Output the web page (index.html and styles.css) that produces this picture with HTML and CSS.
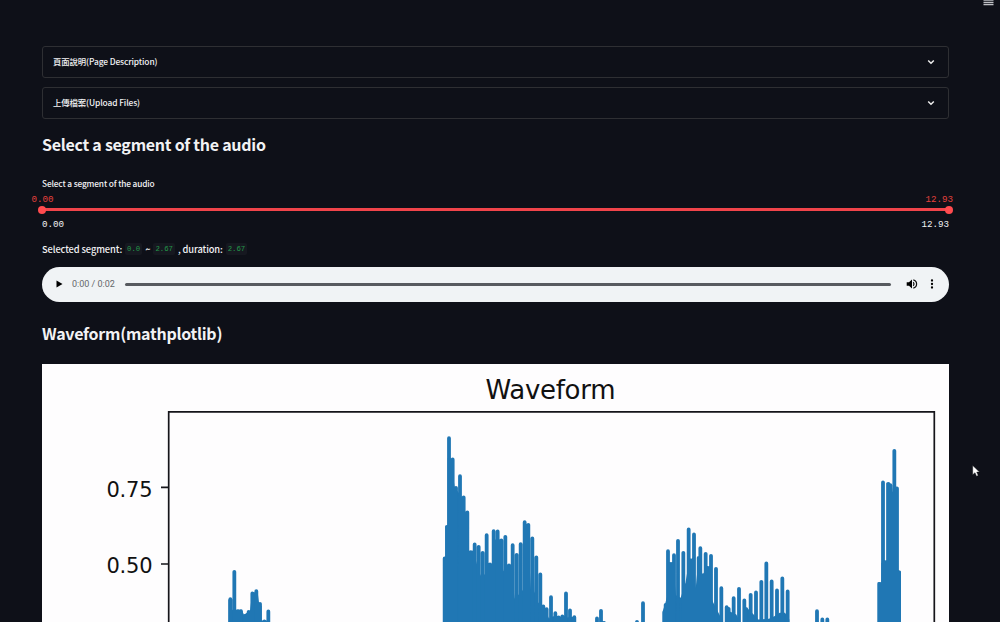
FILE: index.html
```html
<!DOCTYPE html>
<html lang="zh-Hant">
<head>
<meta charset="utf-8">
<title>Waveform</title>
<link rel="stylesheet" href="styles.css">
</head>
<body>
<svg class="menu" viewBox="0 0 11 8"><path d="M.5 0H10.500M.5 2.300H10.500M.5 4.500H10.500"/></svg>
<main class="page">
  <section class="expander"><span>頁面說明(Page Description)</span><svg class="chevron" viewBox="0 0 8 6"><path d="M1.200 1.500L4 4.200L6.800 1.500"/></svg></section>
  <section class="expander"><span>上傳檔案(Upload Files)</span><svg class="chevron" viewBox="0 0 8 6"><path d="M1.200 1.500L4 4.200L6.800 1.500"/></svg></section>
  <h2 class="heading">Select a segment of the audio</h2>
  <div class="slider">
    <div class="label">Select a segment of the audio</div>
    <div class="values"><span>0.00</span><span>12.93</span></div>
    <div class="track"><i class="thumb"></i><i class="thumb"></i></div>
    <div class="limits"><span>0.00</span><span>12.93</span></div>
  </div>
  <p class="selected"><span>Selected segment:</span><code>0.0</code><span>~</span><code>2.67</code><span>, duration:</span><code>2.67</code></p>
  <div class="player">
    <svg class="play" viewBox="0 0 7 8"><path d="M.5.500L6.500 4L.5 7.500Z"/></svg>
    <span class="time">0:00 / 0:02</span>
    <span class="progress"></span>
    <svg class="volume" viewBox="0 0 12 10"><path d="M.7 3.300H3L6 .5V9.500L3 6.700H.7Z"/><path class="wave" d="M7.300 3.200Q8.700 5 7.300 6.800M7.300.9C11.700 2 11.700 8 7.300 9.100"/></svg>
    <svg class="dots" viewBox="0 0 4 10"><circle cx="2" cy="1.500" r="1.150"/><circle cx="2" cy="5" r="1.150"/><circle cx="2" cy="8.500" r="1.150"/></svg>
  </div>
  <h2 class="heading wave-title">Waveform(mathplotlib)</h2>
  <svg class="plot" viewBox="42 364.500 907 258">
    <text class="plot-title" x="550.500" y="399.500" textLength="130">Waveform</text>
    <text class="tick" x="106.500" y="497" textLength="46">0.75</text>
    <text class="tick" x="106.500" y="573.800" textLength="46">0.50</text>
    <path class="axes" d="M168.700 640V412.300H934.300V640M161 487.800H168.700M161 564.500H168.700"/>
    <g transform="translate(430 425) scale(.33333)">
      <path class="body" d="M39 620V400H46V304H53V100H62L74 188L96 218H104L107 415H113L118 380L130 378L141 420L152 453L164 450L175 418L186 435L192 345H209L220 440L232 425L243 438L254 522L266 510L278 497L289 475L300 495L309 345L313 500L325 535L340 545L357 582L370 575L403 580L437 576V620Z"/>
      <path class="bars" d="M44 402V620M51 307V620M57 41V620M68 105V620M78 190V620M90 155V620M101 219V620M112 264V620M122 383V620M134 360V620M146 367V620M158 385V620M170 332V620M180 420V620M191 320V620M203 321V620M214 348V620M226 337V620M237 423V620M248 362V620M260 391V620M272 359V620M284 293V620M295 301V620M307 342V620M319 399V620M331 450V620M340 546V620M350 554V620M363 518V620M376 566V620M386 579V620M397 576V620M408 507V620M420 558V620M433 578V620"/>
    </g>
    <g transform="translate(210 550) scale(.33333)">
      <path class="body" d="M55 230V150H67V181H95L102 196L120 183L127 128H143L147 159L155 170V213H180V230Z"/>
      <path class="bars" d="M61 149V230M73 67V230M84 185V230M93 185V230M105 199V230M116 187V230M127 132V230M139 125V230M150 163V230M163 216V230M175 186V230"/>
    </g>
    <g transform="translate(560 500) scale(.33333)">
      <path class="bars" d="M111 357V380M123 334V380M132 370V380M231 367V380M249 311V380"/>
    </g>
    <g transform="translate(650 510) scale(.33333)">
      <path class="body" d="M38 350V305L45 284L53 255V160H69L78 257L92 265L106 222L118 150H128L137 238L146 142L157 230L168 135L174 240L190 280L207 313L223 345V350ZM238 350V305L259 315L276 350L291 295L308 312L325 330L357 328L373 320L389 310H405L418 330V350Z"/>
      <path class="bars" d="M43 309V350M47 286V350M54 125V350M63 163V350M72 137V350M84 94V350M100 130V350M107 228V350M116 60V350M124 153V350M132 75V350M141 240V350M146 145V350M151 116V350M160 197V350M167 133V350M174 175V350M183 139V350M198 178V350M214 236V350M230 293V350M236 298V350M251 266V350M267 238V350M283 273V350M288 298V350M302 256V350M318 249V350M334 217V350M349 162V350M365 216V350M381 243V350M397 207V350M413 246V350M501 305V350M517 330V350M532 330V350"/>
    </g>
    <g transform="translate(860 400) scale(.33333)">
      <path class="body" d="M53 680V548H64V490H79V250H89L98 280V266H114V515H123V680Z"/>
      <path class="bars" d="M58 553V680M69 249V680M77 488V680M85 253V680M91 257V680M98 283V680M103 154V680M111 267V680M117 518V680"/>
    </g>
  </svg>
</main>
<svg class="cursor" viewBox="0 0 9 12"><path d="M.7.500V9.700L3 7.700L4.500 11.200L6.200 10.400L4.700 7.100H7.500Z"/></svg>
</body>
</html>
```
FILE: styles.css
```css
* { box-sizing: border-box; }
body { margin: 0; height: 622px; overflow: hidden; background: #0e1018; color: #f2f2f4; font-family: "Noto Sans CJK TC", "Noto Sans", sans-serif; }
svg { display: block; }
.page { width: 907px; margin-left: 42px; padding-top: 46px; }
.menu { position: absolute; left: 983px; top: 0; width: 11px; height: 8px; fill: none; stroke: #bfc0c4; stroke-width: 1.300; }
.expander { display: flex; align-items: center; justify-content: space-between; height: 31.500px; padding: 0 13px 1px 10px; margin-bottom: 9.500px; border: 1px solid #2e2f33; border-radius: 3px; font-size: 8.400px; font-weight: 500; letter-spacing: -.1px; }
.chevron { width: 8px; height: 6px; margin-top: 1px; fill: none; stroke: #eee; stroke-width: 1.500; }
.heading { height: 32px; margin: 0; line-height: 32px; font-size: 16px; font-weight: 700; letter-spacing: -.27px; white-space: nowrap; }
.slider { padding-top: 15px; }
.label { height: 16px; line-height: 16px; font-size: 8.300px; font-weight: 500; letter-spacing: -.14px; }
.values, .limits { display: flex; justify-content: space-between; height: 13px; line-height: 13px; font-family: "Liberation Mono", monospace; font-size: 9.200px; }
.values { margin: 2px -4px 0 -10.500px; color: #e5413d; }
.track { display: flex; align-items: center; justify-content: space-between; height: 3px; margin: 2px 0 7px; background: #f0444a; }
.thumb { width: 8px; height: 8px; margin: 0 -4px; border-radius: 50%; background: #ff4b4f; }
.selected { display: flex; align-items: center; height: 18px; margin: 9px 0 9px; font-size: 9.300px; font-weight: 500; letter-spacing: -.1px; white-space: pre; }
.selected code { margin: 0 3px; padding: 1px 2px; border-radius: 2px; background: #161820; color: #23994a; font: 7.300px/10px "Liberation Mono", monospace; letter-spacing: 0; }
.player { display: flex; align-items: center; height: 34.500px; padding: 0 15px 0 14px; border-radius: 18px; background: #f0f3f5; }
.play { width: 7px; height: 8px; }
.time { width: 44px; margin: 0 9px 0 9px; color: #65676a; font: 9px "Roboto", sans-serif; white-space: nowrap; }
.progress { flex: 1; height: 2.500px; border-radius: 2px; background: #575a5f; }
.volume { width: 12px; height: 10px; margin-left: 15px; }
.wave { fill: none; stroke: #111; stroke-width: 1.200; }
.dots { width: 4px; height: 10px; margin-left: 12px; }
.wave-title { margin: 15px 0 15.500px; }
.plot { width: 907px; height: 258px; background: #fefdfe; }
.plot text { font-family: "DejaVu Sans", sans-serif; fill: #111; }
.plot-title { font-size: 26px; text-anchor: middle; }
.tick { font-size: 21px; }
.axes { fill: none; stroke: #15151a; stroke-width: 1.700; }
.body { fill: #2077b4; }
.bars { fill: none; stroke: #2077b4; stroke-width: 11.400; stroke-linecap: round; }
.cursor { position: absolute; left: 971.500px; top: 464.500px; width: 9px; height: 12px; fill: #fff; stroke: #0b0c10; stroke-width: .4; }
```
